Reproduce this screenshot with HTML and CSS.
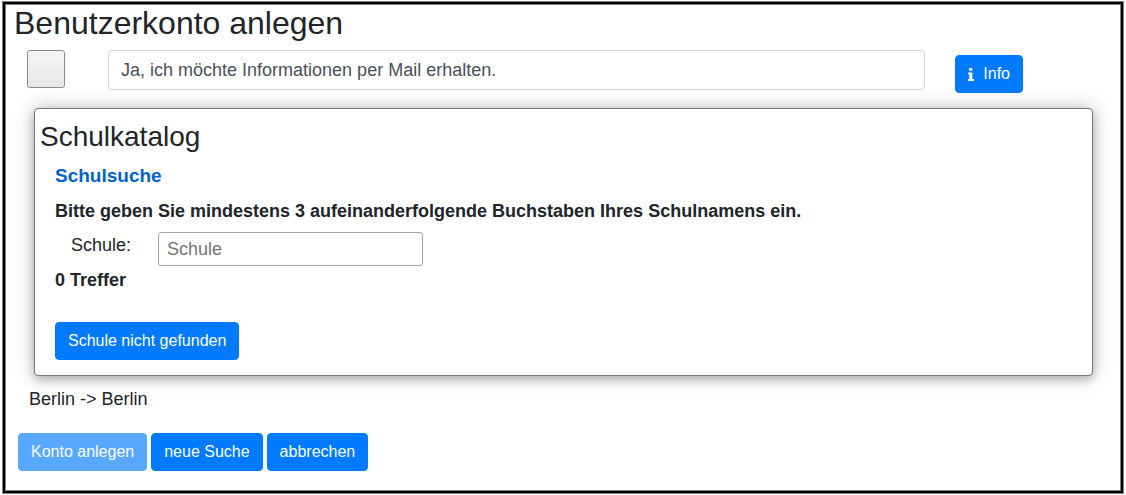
FILE: index.html
```html
<!DOCTYPE html>
<html lang="de">
<head>
<meta charset="utf-8">
<title>Benutzerkonto anlegen</title>
<link rel="stylesheet" href="styles.css">
</head>
<body>
<main class="page">
  <h1 class="page-title">Benutzerkonto anlegen</h1>
  <form class="account">
    <div class="consent">
      <input class="consent-check" type="checkbox" id="mail-consent">
      <label class="consent-text" for="mail-consent">Ja, ich möchte Informationen per Mail erhalten.</label>
      <button class="btn btn-info" type="button">
        <svg class="info-icon" viewBox="0 0 6 13" aria-hidden="true"><path fill="currentColor" d="M1.6 0h2.2q.6 0 .6.6v1.6q0 .6-.6.6H1.6q-.6 0-.6-.6V.6Q1 0 1.600 0zM.5 4.600h3.400q.5 0 .5.5v5.800h1.100q.5 0 .5.5v1.100q0 .5-.5.5H.5q-.5 0-.5-.5v-1.100q0-.5.5-.5h.8V6.600H.5q-.5 0-.5-.5v-1q0-.5.5-.5z"/></svg>
        <span>Info</span>
      </button>
    </div>
    <section class="catalog">
      <h2 class="catalog-title">Schulkatalog</h2>
      <div class="catalog-body">
        <h3 class="search-title">Schulsuche</h3>
        <p class="search-hint">Bitte geben Sie mindestens 3 aufeinanderfolgende Buchstaben Ihres Schulnamens ein.</p>
        <div class="search-row">
          <label class="search-label" for="school">Schule:</label>
          <input class="search-input" type="text" id="school" placeholder="Schule">
        </div>
        <p class="hits">0 Treffer</p>
        <button class="btn" type="button">Schule nicht gefunden</button>
      </div>
    </section>
    <p class="location">Berlin -&gt; Berlin</p>
    <div class="actions">
      <button class="btn" type="submit" disabled>Konto anlegen</button>
      <button class="btn" type="button">neue Suche</button>
      <button class="btn" type="button">abbrechen</button>
    </div>
  </form>
</main>
</body>
</html>
```
FILE: styles.css
```css
*,
*::before,
*::after {
  box-sizing: border-box;
}

body {
  margin: 0;
  padding: 2px 3px;
  background: #fff;
  color: #212529;
  font: 18px/27px "Liberation Sans", Arial, sans-serif;
}

h1,
h2,
h3,
p {
  margin: 0;
}

.page {
  padding: 0 28px 20px 9px;
  border: 2px solid #000;
  box-shadow: 0 0 0 1px #808080, inset 0 0 0 1px #808080;
}

.page-title {
  font-size: 32px;
  font-weight: 400;
  line-height: 38px;
}

.btn {
  padding: 6px 12px;
  border: 1px solid #007bff;
  border-radius: 4px;
  background: #007bff;
  color: #fff;
  font: 16px/24px "Liberation Sans", Arial, sans-serif;
}

.btn:disabled {
  opacity: 0.65;
}

.consent {
  display: flex;
  align-items: flex-start;
  padding: 8px 70px 0 13px;
}

.consent-check {
  appearance: none;
  width: 38px;
  height: 38px;
  margin: 0 43px 0 0;
  border: 1px solid #8c8c84;
  border-radius: 3px;
  background: linear-gradient(#f6f6f6, #e6e6e6);
}

.consent-text {
  flex: 1;
  padding: 6px 12px;
  border: 1px solid #ced4da;
  border-radius: 4px;
  color: #495057;
  line-height: 26px;
}

.btn-info {
  display: flex;
  align-items: center;
  gap: 9px;
  margin: 5px 0 0 30px;
}

.info-icon {
  width: 6px;
  height: 13px;
}

.catalog {
  margin: 15px 0 0 20px;
  padding: 9px 5px 15px;
  border: 1px solid #777;
  border-radius: 4px;
  background: #fff;
  box-shadow: 0 4px 8px 0 rgba(0, 0, 0, 0.2), 0 0 20px 0 rgba(0, 0, 0, 0.25);
}

.catalog-title {
  font-size: 28px;
  font-weight: 400;
  line-height: 38px;
}

.catalog-body {
  padding: 6px 15px 0;
}

.search-title {
  color: #0062cc;
  font-size: 19px;
  line-height: 27px;
}

.search-hint {
  margin-top: 9px;
  font-weight: 700;
}

.search-row {
  display: flex;
  align-items: flex-start;
  gap: 27px;
  margin-top: 7px;
  padding-left: 16px;
}

.search-input {
  width: 265px;
  height: 34px;
  padding: 0 8px;
  border: 1px solid #a6a6a6;
  border-radius: 3px;
  font: inherit;
}

.search-input::placeholder {
  color: #757575;
}

.hits {
  margin: 1px 0 28px;
  font-weight: 700;
}

.location {
  margin: 10px 0 20px 15px;
}

.actions {
  display: flex;
  flex-wrap: wrap;
  gap: 4px;
  padding-left: 4px;
}
```
